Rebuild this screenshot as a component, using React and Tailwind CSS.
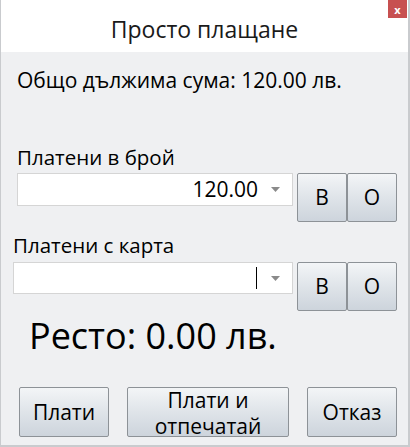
import React from "react";

const font = { fontFamily: '"Open Sans", "Noto Sans", sans-serif' };

function Btn({ children, className = "" }) {
  return (
    <div
      className={`flex items-center justify-center text-center rounded-[2px] border border-[#8d9297] bg-gradient-to-b from-[#f3f5f7] via-[#dfe4e9] to-[#cdd4dc] text-black ${className}`}
    >
      {children}
    </div>
  );
}

function Arrow() {
  return (
    <svg width="9" height="5" viewBox="0 0 9 5" className="shrink-0">
      <path d="M0 0 L9 0 L4.5 5 Z" fill="#8a8a8a" />
    </svg>
  );
}

export default function App() {
  return (
    <div
      className="w-[410px] h-[447px] bg-[#eff0f2] border-l border-r-2 border-b-2 border-[#c9cbce] flex flex-col overflow-hidden"
      style={font}
    >
      <div className="relative h-[52px] bg-white flex items-center justify-center shrink-0">
        <span className="text-[23px] text-[#1a1a1a] leading-none pt-[6px]">Просто плащане</span>
        <div className="absolute top-0 right-[1px] w-[19px] h-[18px] bg-[#c75050] flex items-center justify-center text-white text-[11px] font-bold leading-none">
          x
        </div>
      </div>

      <div className="pl-[16px] pt-[16px] text-[21px] leading-[24px] text-black whitespace-nowrap">
        Общо дължима сума: 120.00 лв.
      </div>

      <div className="pl-[16px] mt-[53px] text-[20.5px] leading-[24px] text-black">Платени в брой</div>
      <div className="flex mt-[4px] pl-[16px]">
        <div className="w-[276px] h-[33px] bg-white border border-[#d5d5d5] flex items-center justify-end pr-[12px] gap-[13px] text-[21px] text-black">
          <span>120.00</span>
          <Arrow />
        </div>
        <div className="flex ml-[4px]">
          <Btn className="w-[50px] h-[49px] text-[21px]">B</Btn>
          <Btn className="w-[50px] h-[49px] text-[21px]">O</Btn>
        </div>
      </div>

      <div className="pl-[12px] mt-[11px] text-[20.5px] leading-[24px] text-black">Платени с карта</div>
      <div className="flex mt-[5px] pl-[12px]">
        <div className="w-[280px] h-[32px] bg-white border border-[#d5d5d5] flex items-center justify-end pr-[12px] text-[18px] text-black">
          <div className="w-[1px] h-[22px] bg-black mr-[14px]" />
          <Arrow />
        </div>
        <div className="flex ml-[4px]">
          <Btn className="w-[50px] h-[49px] text-[21px]">B</Btn>
          <Btn className="w-[50px] h-[49px] text-[21px]">O</Btn>
        </div>
      </div>

      <div className="pl-[28px] mt-[5px] text-[36px] leading-[40px] text-black whitespace-nowrap">Ресто: 0.00 лв.</div>

      <div className="flex mt-[31px] pl-[18px] gap-[18px]">
        <Btn className="w-[90px] h-[50px] text-[21px] leading-[24px]">Плати</Btn>
        <Btn className="w-[162px] h-[50px] text-[21px] leading-[26px] pt-[1px]">Плати и<br />отпечатай</Btn>
        <Btn className="w-[90px] h-[50px] text-[21px] leading-[24px]">Отказ</Btn>
      </div>
    </div>
  );
}
